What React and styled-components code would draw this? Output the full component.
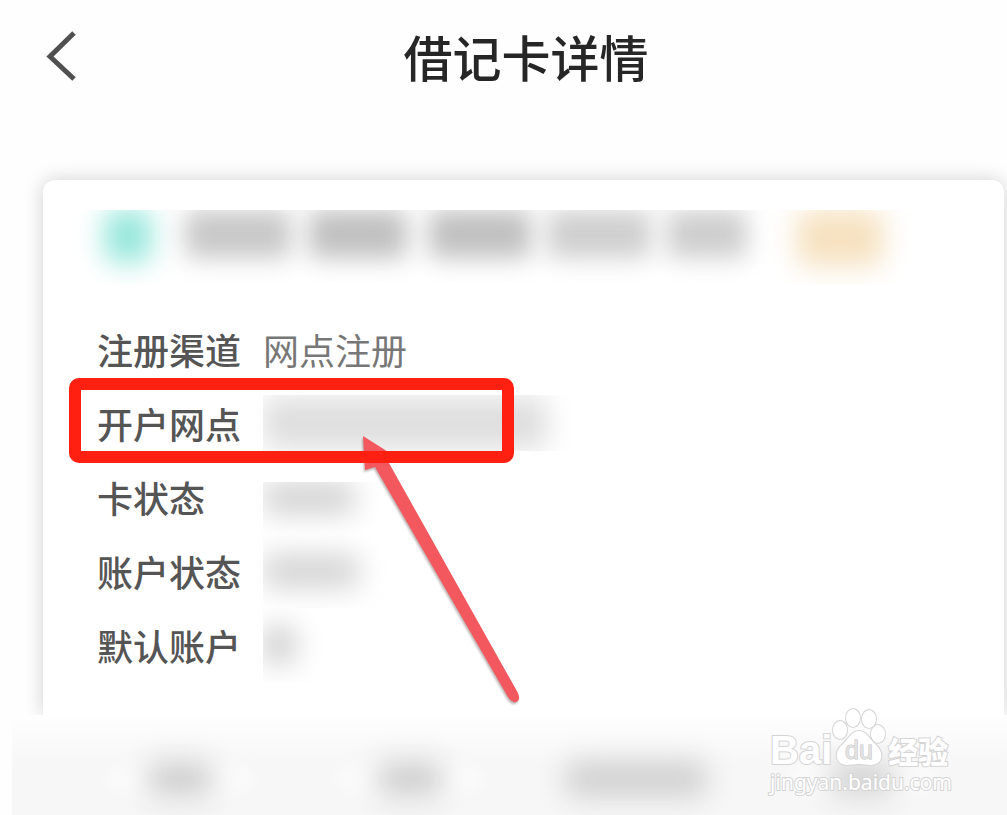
import React from 'react'
import styled, { createGlobalStyle } from 'styled-components'

const GlobalStyle = createGlobalStyle`
* {
box-sizing: border-box;
}
body {
margin: 0;
background-color: #fefefe;
font-family: "Liberation Sans", "Noto Sans CJK SC", sans-serif;
}
`

const Page = styled.div`
position: relative;
display: flex;
flex-direction: column;
min-height: 100vh;
overflow: hidden;
`
const Header = styled.header`
display: grid;
grid-template-columns: 1fr auto 1fr;
align-items: center;
padding: 18px 0 22px 45px;
margin-bottom: 64px;
`
const BackButton = styled.button`
display: flex;
justify-self: start;
padding: 0;
border: none;
background: none;
cursor: pointer;
`
const Title = styled.h1`
margin: 0;
font-family: "Noto Sans CJK SC", sans-serif;
font-size: 49px;
line-height: 76px;
font-weight: 500;
color: #262626;
`
const Card = styled.main`
margin: 0 3px 0 43px;
padding: 30px 0 33px;
border-radius: 12px 12px 0 0;
background-color: white;
box-shadow: 0 0 20px rgba(0, 0, 0, 0.18);
`
const CardNumber = styled.div`
display: flex;
align-items: flex-start;
height: 74px;
margin-bottom: 28px;
padding-left: 62px;
overflow: hidden;
`
const Smudge = styled.span`
flex: none;
width: ${props => props.$width}px;
height: ${props => props.$height || 48}px;
margin-right: ${props => props.$gap || 0}px;
border-radius: 8px;
background-color: ${props => props.$color || "#c0c0c0"};
filter: blur(${props => props.$blur || 14}px);
`
const List = styled.dl`
margin: 0;
`
const Row = styled.div`
position: relative;
display: flex;
align-items: center;
height: 74px;
padding-left: 54px;
font-family: "Noto Sans CJK SC", sans-serif;
font-size: 36px;
line-height: 48px;
`
const Label = styled.dt`
width: 166px;
font-weight: 500;
color: #555;
`
const Value = styled.dd`
margin: 0;
color: #777;
`
const Hidden = styled.dd`
display: flex;
align-items: center;
width: 320px;
height: 56px;
margin: 0;
overflow: hidden;
`
const HiddenLow = styled(Hidden)`
align-items: flex-start;
align-self: flex-end;
height: 52px;
`
const HiddenTall = styled(Hidden)`
height: 74px;
`
const Highlight = styled.span`
position: absolute;
z-index: 2;
top: -8px;
left: 26px;
width: 445px;
height: 85px;
border: 12px solid #ff2012;
border-radius: 10px;
`
const Arrow = styled.svg`
position: absolute;
z-index: 1;
top: 48px;
left: 318px;
pointer-events: none;

path {
filter: drop-shadow(-1px 2px 1px rgba(90, 60, 60, 0.4));
}
`
const Actions = styled.footer`
position: relative;
display: flex;
flex: 1;
align-items: flex-end;
gap: 62px;
min-height: 100px;
margin-left: 12px;
padding: 0 0 4px 84px;
overflow: hidden;
background: linear-gradient(#fefefe, #f7f7f7 50%);
`
const Action = styled.button`
display: flex;
align-items: center;
justify-content: center;
width: ${props => props.$wide ? 160 : 168}px;
height: 64px;
padding: 0;
border: none;
background: ${props => props.$wide ? "none" : "radial-gradient(#fefefe 30%, transparent 70%)"};
cursor: pointer;
`
const Watermark = styled.div`
position: absolute;
z-index: 3;
right: 55px;
bottom: 20px;
color: white;
-webkit-text-stroke: 2px #d4d4d4;
paint-order: stroke fill;
`
const Brand = styled.div`
display: flex;
align-items: flex-end;
margin-bottom: 2px;
font-family: "Noto Sans CJK SC", sans-serif;
font-size: 30px;
line-height: 34px;
font-weight: 900;
`
const Latin = styled.span`
font-family: "Liberation Sans", sans-serif;
font-size: 40px;
font-weight: 700;
`
const Paw = styled.svg`
margin-right: 2px;
`
const PawText = styled.text`
font-family: "Liberation Sans", sans-serif;
font-size: 25px;
font-weight: 400;
fill: #e2e2e2;
stroke: #c4c4c4;
stroke-width: 1px;
-webkit-text-stroke: 0;
`
const Site = styled.div`
font-family: "Noto Sans", sans-serif;
font-size: 21px;
line-height: 26px;
`

// widths of the masked digit groups
const groups = [
  { width: 106, gap: 18, color: "#c8c8c8" },
  { width: 98, gap: 22 },
  { width: 102, gap: 16 },
  { width: 104, gap: 16, color: "#cfcfcf" },
  { width: 80, gap: 50, color: "#cecece" },
]

const App = () => {
  return (
    <>
      <GlobalStyle />
      <Page>
        <Header>
          <BackButton aria-label="返回">
            <svg width="32" height="50" viewBox="0 0 32 50" fill="none" stroke="#505050" strokeWidth="5">
              <path d="M29 2 L5 25.500 L29 48" />
            </svg>
          </BackButton>
          <Title>借记卡详情</Title>
        </Header>
        <Card>
          <CardNumber>
            <Smudge $width={46} $height={52} $gap={34} $color="#92e6da" />
            {groups.map((g, i) => (
              <Smudge key={i} $width={g.width} $gap={g.gap} $color={g.color} $blur={12} />
            ))}
            <Smudge $width={86} $height={56} $color="#f6e1bf" />
          </CardNumber>
          <List>
            <Row>
              <Label>注册渠道</Label>
              <Value>网点注册</Value>
            </Row>
            <Row>
              <Label>开户网点</Label>
              <Hidden>
                <Smudge $width={284} $height={52} $color="#dedede" />
              </Hidden>
              <Arrow width="165" height="280" viewBox="0 0 165 280">
                <path
                  d="M2 2 L29 19 L24 22 L157 259 Q160 266 155 268 Q151 269 147 263 L14 33 L4 36 Z"
                  fill="#f2585d"
                />
              </Arrow>
              <Highlight />
            </Row>
            <Row>
              <Label>卡状态</Label>
              <HiddenLow>
                <Smudge $width={92} $height={32} $color="#d2d2d2" />
              </HiddenLow>
            </Row>
            <Row>
              <Label>账户状态</Label>
              <HiddenTall>
                <Smudge $width={96} $height={34} $color="#d4d4d4" />
              </HiddenTall>
            </Row>
            <Row>
              <Label>默认账户</Label>
              <HiddenTall>
                <Smudge $width={32} $height={38} $color="#cecece" />
              </HiddenTall>
            </Row>
          </List>
        </Card>
        <Actions>
          <Action aria-label="操作一">
            <Smudge $width={66} $height={36} $color="#cecece" />
          </Action>
          <Action aria-label="操作二">
            <Smudge $width={66} $height={36} $color="#cecece" />
          </Action>
          <Action $wide aria-label="操作三">
            <Smudge $width={140} $height={36} $color="#d0d0d0" />
          </Action>
          <Action aria-label="操作四">
            <Smudge $width={66} $height={36} $color="#d2d2d2" />
          </Action>
        </Actions>
        <Watermark>
          <Brand>
            <Latin>Bai</Latin>
            <Paw width="54" height="60" viewBox="0 0 54 60" fill="white" stroke="#d4d4d4" strokeWidth="2">
              <ellipse cx="8" cy="23" rx="7" ry="9" />
              <ellipse cx="21" cy="11" rx="7" ry="9" />
              <ellipse cx="37" cy="12" rx="7" ry="9" />
              <ellipse cx="46" cy="27" rx="7" ry="9" />
              <path d="M27 24 C20 24 17 31 11 37 C4 43 3 50 7 55 C12 60 20 57 27 57 C34 57 42 60 47 55 C51 50 50 43 43 37 C37 31 34 24 27 24 Z" />
              <PawText x="27" y="52" textAnchor="middle">du</PawText>
            </Paw>
            <span>经验</span>
          </Brand>
          <Site>jingyan.baidu.com</Site>
        </Watermark>
      </Page>
    </>
  )
}

export default App
